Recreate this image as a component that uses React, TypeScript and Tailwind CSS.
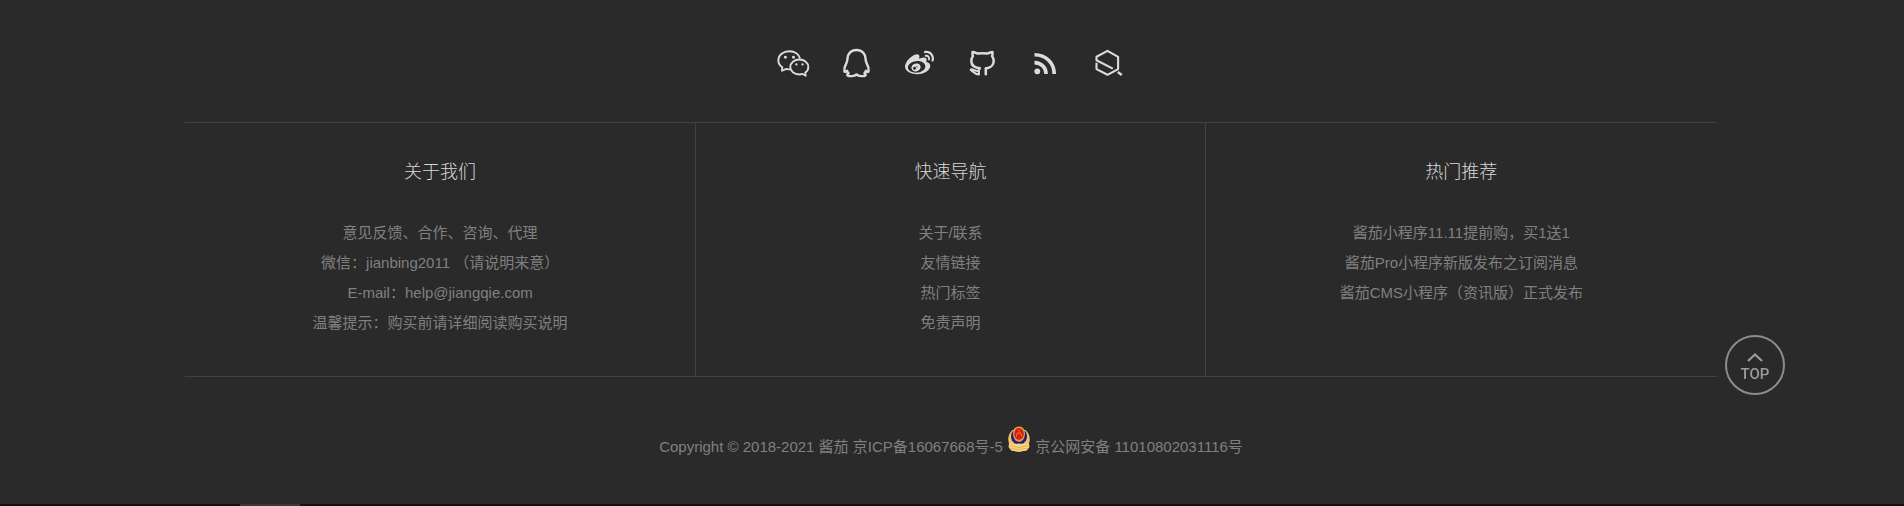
import { FaWeibo } from "react-icons/fa";

const columns = [
  {
    title: "关于我们",
    items: [
      "意见反馈、合作、咨询、代理",
      "微信：jianbing2011 （请说明来意）",
      "E-mail：help@jiangqie.com",
      "温馨提示：购买前请详细阅读购买说明",
    ],
  },
  { title: "快速导航", items: ["关于/联系", "友情链接", "热门标签", "免责声明"] },
  {
    title: "热门推荐",
    items: [
      "酱茄小程序11.11提前购，买1送1",
      "酱茄Pro小程序新版发布之订阅消息",
      "酱茄CMS小程序（资讯版）正式发布",
    ],
  },
];

function WechatIcon() {
  return (
    <svg viewBox="-1 0 35 34" className="size-full" fill="none" stroke="currentColor" strokeWidth="1.900" strokeLinejoin="round" aria-hidden="true">
      <path d="M14 23.600c-1.600 0-3-.2-4.300-.6L5.200 25l.3-3.600C2.700 19.500 1.400 17 1.400 14.200 1.400 8.800 6.600 4.900 12.700 4.900c5.600 0 10 3.100 11.100 7.700" />
      <path d="M23 13.400c5.300 0 9.300 3.500 9.300 7.700 0 2.600-1.300 4.600-3.300 6l.6 3-3.300-1.800c-1 .3-2.100.5-3.300.5-5.300 0-9.300-3.500-9.300-7.700s4-7.700 9.300-7.700z" />
      <g fill="currentColor" stroke="none">
        <circle cx="8.700" cy="11" r="1.500" /><circle cx="17" cy="11" r="1.500" />
        <circle cx="20" cy="18.500" r="1.200" /><circle cx="26.300" cy="18.500" r="1.200" />
      </g>
    </svg>
  );
}

function QqIcon() {
  return (
    <svg viewBox="0 0 34 34" className="size-full" fill="none" stroke="currentColor" strokeWidth="2.400" strokeLinejoin="round" aria-hidden="true">
      <path d="M17.500 4c-5.600 0-9.100 4-9.100 9 0 1.600-.2 2.600-1 4.200-1.700 3.100-2.300 5.600-2 7.900.2 1.300 1.300 1 2.700-.3.300 1 .8 1.800 1.500 2.600-1.400.6-1.600 1.400-1.100 1.900 1.300 1.300 7.200 1.200 9-.9 1.800 2.100 7.700 2.200 9 .9.500-.5.300-1.300-1.100-1.900.7-.8 1.200-1.600 1.500-2.600 1.400 1.300 2.500 1.600 2.700.3.300-2.300-.3-4.800-2-7.900-.8-1.600-1-2.600-1-4.200 0-5-3.500-9-9.100-9z" />
    </svg>
  );
}

function WeiboIcon() {
  return <FaWeibo className="size-[29px]" aria-hidden="true" />;
}

function GithubIcon() {
  return (
    <svg viewBox="0 0 34 34" className="size-full" fill="none" stroke="currentColor" strokeWidth="2.500" strokeLinejoin="round" aria-hidden="true">
      <path d="M15.600 22.200c-5.700-.3-9.300-3-9.300-7.300 0-2 .6-3.400 1.600-4.600-.6-1.600-.6-3.100-.3-4.400 2 0 3.300.7 5 1.700 3.200-.4 6.500-.4 9.800 0 1.700-1 3-1.700 5-1.700.3 1.300.3 2.800-.3 4.400 1 1.200 1.600 2.600 1.600 4.600 0 4.300-3.300 6.800-6.700 7.300h-1.200v7" />
      <path d="M15.200 21.500l-1.300 2.600v4.300c-4.200.1-5.500-2.900-8.200-4.500l.4-.7c3 .4 4.500 2.400 7.800 1.700" strokeWidth="2.100" />
    </svg>
  );
}

function RssIcon() {
  return (
    <svg viewBox="0 0 34 34" className="size-full" fill="none" stroke="currentColor" strokeWidth="3.600" aria-hidden="true">
      <path d="M6.500 8.800c11.500 0 19.700 8.300 19.700 19.200" />
      <path d="M6.500 16.600c6.700 0 11.600 5 11.600 11.400" />
      <circle cx="9.300" cy="25.300" r="2.900" fill="currentColor" stroke="none" />
    </svg>
  );
}

function HexagonIcon() {
  return (
    <svg viewBox="0 0 34 34" className="size-full" fill="none" stroke="currentColor" strokeWidth="2.100" strokeLinejoin="round" aria-hidden="true">
      <path d="M21.800 22.600 5.500 14.300v-3.500l11-5.900 10.600 5.900v12.300l-10.600 5.700-11-5.700v-6.300" />
      <path d="m26.800 26 4 3" strokeWidth="2.300" />
    </svg>
  );
}

const socials = [
  { label: "微信", icon: WechatIcon },
  { label: "QQ", icon: QqIcon },
  { label: "微博", icon: WeiboIcon },
  { label: "GitHub", icon: GithubIcon },
  { label: "RSS", icon: RssIcon },
  { label: "小程序", icon: HexagonIcon },
];

function PoliceBadge() {
  return (
    <svg viewBox="0 0 24 26" className="inline-block h-[26px] w-6 align-baseline" aria-hidden="true">
      <path d="M5.500 4C1.500 7.500.3 13 2 17.500L1.500 21l2.700 3.500 7.800 1.300 7.800-1.300 2.700-3.500-.5-3.500C23.700 13 22.500 7.500 18.500 4z" fill="#f0c36a" />
      <path d="M5.800 5C3 9 3.500 14.500 7.500 17.200c2.800 1 6.200 1 9 0C20.500 14.500 21 9 18.200 5z" fill="#1a2278" />
      <path d="M12 .4C8.500.4 6 3 6 7.200c0 4.600 2.200 8.600 6 8.600s6-4 6-8.600C18 3 15.500.4 12 .4z" fill="#dd9a48" />
      <ellipse cx="12" cy="7.800" rx="4.800" ry="5.900" fill="#d3200f" />
      <path d="M9.500 10.500c0-5 5-5 5 0M12 3.500v2" fill="none" stroke="#ef7448" strokeWidth="1.100" />
      <path d="M2 17c3 1.500 6 1.200 10 .5 4 .7 7 1 10-.5l-.8 5-2.200 2.600-7 1.200-7-1.200L2.800 22z" fill="#f8d47c" />
      <path d="M3 19.500c3.500 1.300 6 .8 9 2.300 3-1.500 5.500-1 9-2.300M4.500 22.500c3 .5 5 .5 7.500 1.500 2.500-1 4.500-1 7.500-1.500" fill="none" stroke="#d29a44" strokeWidth=".6" />
    </svg>
  );
}

export default function App() {
  return (
    <div className="flex min-h-screen flex-col bg-[#2a2a2a] font-['Liberation_Sans','Noto_Sans_CJK_SC',sans-serif] text-[15px] text-[#808080]">
      <footer className="flex-1 pr-[2px]">
        <div className="mx-auto w-[80.500%]">
          <nav aria-label="社交媒体" className="flex justify-center gap-[29px] pt-[46px] pb-[42px]">
            {socials.map(({ label, icon: Icon }) => (
              <a key={label} href="#" aria-label={label} className="flex size-[34px] items-center justify-center text-[#dcdcdc]">
                <Icon />
              </a>
            ))}
          </nav>
          <div className="grid grid-cols-3 divide-x divide-[#424242] border-y border-[#424242]">
            {columns.map((column) => (
              <section key={column.title} className="pt-[34px] pb-[38px] text-center">
                <h2 className="text-[18px] leading-[30px] font-light text-[#d8d8d8]">{column.title}</h2>
                <ul className="mt-[31px] leading-[30px]">
                  {column.items.map((item) => (
                    <li key={item}>
                      <a href="#">{item}</a>
                    </li>
                  ))}
                </ul>
              </section>
            ))}
          </div>
          <p className="pt-[49px] text-center leading-[30px]">
            Copyright © 2018-2021 酱茄 <a href="#">京ICP备16067668号-5</a> <PoliceBadge />{" "}
            <a href="#">京公网安备 11010802031116号</a>
          </p>
        </div>
      </footer>
      <a
        href="#root"
        aria-label="返回顶部"
        className="fixed right-[119px] bottom-[111px] size-[60px] text-[#9c9c9c]"
      >
        <span className="flex size-full flex-col items-center justify-center rounded-full border-2 border-[#8c8c8c] pt-1">
          <svg viewBox="0 0 16 9" className="h-[9px] w-4" fill="none" stroke="currentColor" strokeWidth="2.200" aria-hidden="true">
            <path d="m1 8 7-6.500L15 8" />
          </svg>
          <span className="mt-1 font-['Roboto',sans-serif] text-[15px] leading-[16px] font-medium">TOP</span>
        </span>
      </a>
      <div className="h-0.5 bg-[#141112] pl-20">
        <div className="ml-40 h-full w-15 bg-[#3a3637]" />
      </div>
    </div>
  );
}
